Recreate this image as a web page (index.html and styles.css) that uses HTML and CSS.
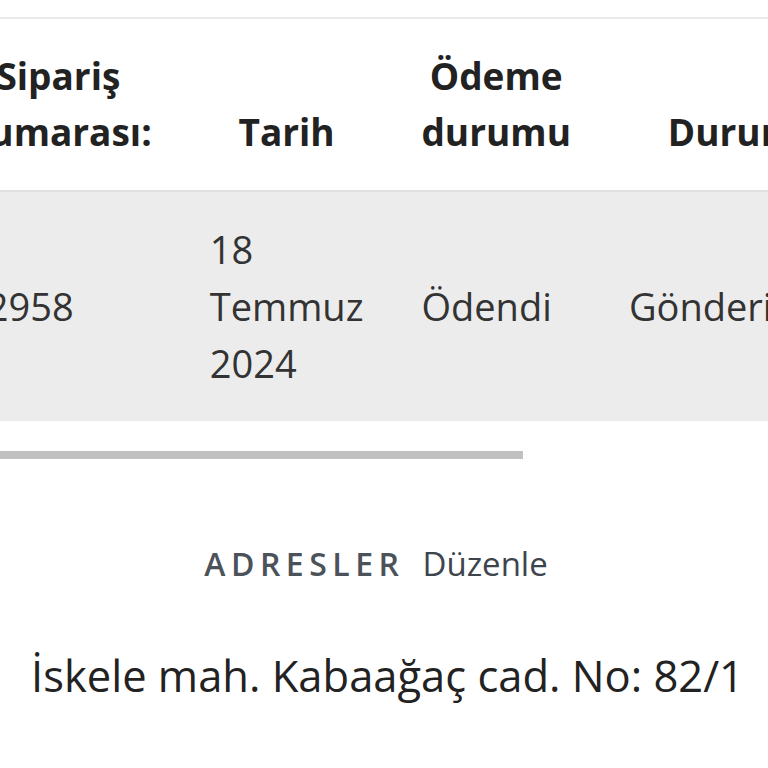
FILE: index.html
```html
<!DOCTYPE html>
<html lang="tr">
<head>
  <meta charset="UTF-8">
  <meta name="viewport" content="width=device-width, initial-scale=1.0">
  <title>Siparişlerim</title>
  <link rel="stylesheet" href="styles.css">
</head>
<body>

  <div class="orders-wrap">
    <table class="orders-table">
      <thead>
        <tr>
          <th>Sipariş numarası:</th>
          <th>Tarih</th>
          <th>Ödeme durumu</th>
          <th class="status-col">Durum</th>
          <th>Toplam</th>
        </tr>
      </thead>
      <tbody>
        <tr>
          <td>12958</td>
          <td>18 Temmuz 2024</td>
          <td>Ödendi</td>
          <td class="status-col">Gönderildi</td>
          <td>450,00</td>
        </tr>
      </tbody>
    </table>
  </div>

  <div class="scroll-track">
    <div class="scroll-thumb"></div>
  </div>

  <div class="address-title">
    <span class="address-label">ADRESLER</span>
    <a class="address-edit" href="#">Düzenle</a>
  </div>

  <p class="address-line">İskele mah. Kabaağaç cad. No: 82/1</p>

</body>
</html>
```

FILE: styles.css
```css
body{
  margin: 0;
  background-color: #fff;
  font-family: "Open Sans", "Liberation Sans", sans-serif;
  color: #333;
}

.orders-wrap{
  overflow: hidden;
  margin-top: 17px;
}

.orders-table{
  border-collapse: collapse;
  margin-left: -64px;
  border-top: 2px solid #e9e9e9;
}

.orders-table th{
  font-size: 37px;
  line-height: 1.5;
  font-weight: bold;
  color: #222;
  text-align: center;
  vertical-align: bottom;
  padding: 29px 29px 31px 29px;
  border-bottom: 2px solid #e0e0e0;
}

.orders-table td{
  font-size: 38px;
  line-height: 1.5;
  color: #333;
  text-align: left;
  vertical-align: middle;
  padding: 29px;
  background-color: #ececec;
}

.status-col{
  min-width: 207px;
}

.scroll-track{
  margin-top: 30px;
  height: 8px;
}

.scroll-thumb{
  width: 523px;
  height: 8px;
  background-color: #c1c1c1;
}

.address-title{
  display: flex;
  justify-content: center;
  align-items: baseline;
  gap: 18px;
  margin-top: 82px;
  padding-right: 16px;
}

.address-label{
  font-size: 32px;
  font-weight: 600;
  letter-spacing: 5.5px;
  color: #4b525a;
}

.address-edit{
  font-size: 33px;
  color: #3d444c;
  text-decoration: none;
}

.address-line{
  margin: 60px 0 0 0;
  padding-left: 7px;
  text-align: center;
  font-size: 43.5px;
  color: #222;
}
```
